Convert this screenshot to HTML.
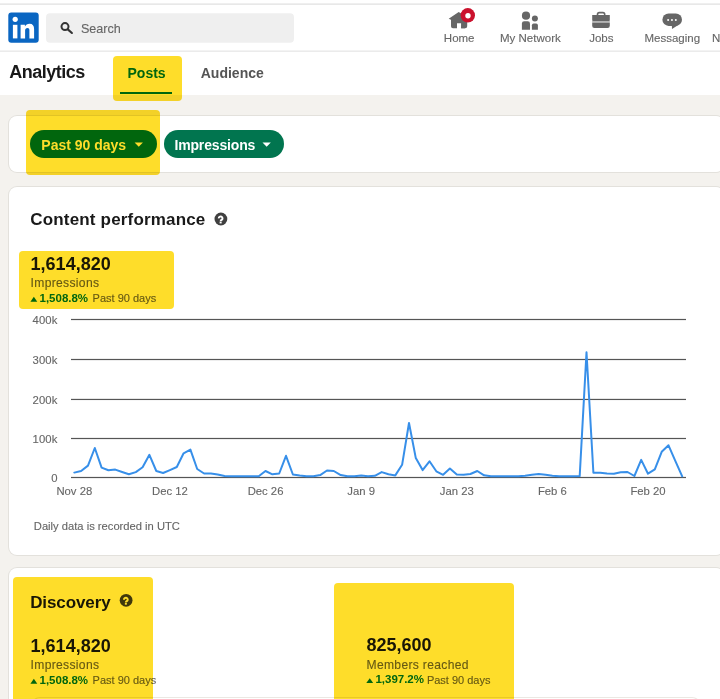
<!DOCTYPE html>
<html><head><meta charset="utf-8"><style>
html,body{margin:0;padding:0;}
body{width:720px;height:699px;overflow:hidden;position:relative;background:#f4f2ee;font-family:"Liberation Sans",sans-serif;}
.t{position:absolute;white-space:nowrap;line-height:1;}
.n{-webkit-text-stroke:0.12px currentColor;}
.r{position:absolute;}
</style></head><body>
<div class="r" style="left:0px;top:0px;width:720px;height:52px;background:#fff;"></div>
<div class="r" style="left:0px;top:3px;width:720px;height:1px;background:#efefef;"></div>
<div class="r" style="left:0px;top:4px;width:720px;height:1px;background:#e8e8e8;"></div>
<div class="r" style="left:0px;top:50px;width:720px;height:1px;background:#f3f3f3;"></div>
<div class="r" style="left:0px;top:51px;width:720px;height:1px;background:#ebebeb;"></div>
<div class="r" style="left:0px;top:52px;width:720px;height:42.5px;background:#fff;"></div>
<svg class="r" style="left:0;top:0" width="720" height="52" viewBox="0 0 720 52">
<rect x="8.3" y="12.4" width="30.4" height="30.4" rx="3" fill="#0a66c2"/>
<circle cx="15.2" cy="19.3" r="2.6" fill="#fff"/>
<rect x="12.9" y="24.8" width="4.5" height="13.6" fill="#fff"/>
<path d="M20.6 24.8 H24.9 V26.6 C25.7 25.0 27.3 23.8 29.6 23.8 C32.6 23.8 34.1 25.7 34.1 29.2 V38.4 H29.4 V30.3 C29.4 28.8 28.7 28 27.4 28 C26 28 25.1 29 25.1 30.6 V38.4 H20.6 Z" fill="#fff"/>
<rect x="46" y="13.2" width="248" height="29.6" rx="4" fill="#efefef"/>
<circle cx="65" cy="26.6" r="3.5" fill="none" stroke="#333" stroke-width="2"/>
<path d="M67.8 29.4 L71.9 33" stroke="#333" stroke-width="2.1" stroke-linecap="round"/>
<!-- home -->
<path d="M448.7 18.8 L458.7 11.9 L465 15.8 V28.3 H461.2 V23.2 H457 V28.3 H453 Q451 28.3 451 26.3 V19.8 Z" fill="#666"/>
<path d="M462 16 L469.6 20.8 L467.2 20.8 V26.3 Q467.2 28.3 465.2 28.3 H461 Z" fill="#666"/>
<circle cx="467.8" cy="15.3" r="7.2" fill="#cb112d"/>
<circle cx="468" cy="15.7" r="2.7" fill="#fff"/>
<!-- network -->
<circle cx="526" cy="15.7" r="4.1" fill="#666"/>
<circle cx="534.9" cy="18.4" r="3" fill="#666"/>
<path d="M521.9 29.7 V23.6 Q521.9 21.3 524.2 21.3 H527.7 Q530 21.3 530 23.6 V29.7 Z" fill="#666"/>
<path d="M531.9 29.7 V25.2 Q531.9 23.4 533.7 23.4 H536.1 Q537.9 23.4 537.9 25.2 V29.7 Z" fill="#666"/>
<!-- jobs -->
<rect x="597.5" y="12.6" width="7.2" height="4.2" rx="1.8" fill="none" stroke="#666" stroke-width="1.6"/>
<path d="M592.2 15.1 H609.8 V20.2 Q609.8 21 609 21 H593 Q592.2 21 592.2 20.2 Z" fill="#666"/>
<rect x="592.2" y="21" width="17.6" height="1.8" fill="#b4b4b4"/>
<path d="M592.2 22.8 H609.8 V25.8 Q609.8 28 607.6 28 H594.4 Q592.2 28 592.2 25.8 Z" fill="#666"/>
<!-- messaging -->
<rect x="662.4" y="13.5" width="19.6" height="12.4" rx="6.2" fill="#666"/>
<path d="M671.8 24.5 L679 24.5 L672 29 Z" fill="#666"/>
<circle cx="668.1" cy="19.9" r="1" fill="#fff"/>
<circle cx="671.95" cy="19.9" r="1" fill="#fff"/>
<circle cx="675.8" cy="19.9" r="1" fill="#fff"/>
</svg>
<div class="t n" style="left:80.90px;top:22.93px;font-size:12.6px;font-weight:400;color:#666;">Search</div>
<div class="t n" style="left:259.20px;width:400px;text-align:center;top:32.87px;font-size:11.5px;font-weight:400;color:#666;">Home</div>
<div class="t n" style="left:330.40px;width:400px;text-align:center;top:32.87px;font-size:11.5px;font-weight:400;color:#666;">My Network</div>
<div class="t n" style="left:401.30px;width:400px;text-align:center;top:32.87px;font-size:11.5px;font-weight:400;color:#666;">Jobs</div>
<div class="t n" style="left:472.30px;width:400px;text-align:center;top:32.87px;font-size:11.5px;font-weight:400;color:#666;">Messaging</div>
<div class="t n" style="left:712.00px;top:32.87px;font-size:11.5px;font-weight:400;color:#666;">N</div>
<div class="t" style="left:9.30px;top:62.96px;font-size:18px;font-weight:700;color:#191919;letter-spacing:-0.5px;">Analytics</div>
<div class="t" style="left:127.50px;top:66.15px;font-size:14px;font-weight:700;color:#01754f;">Posts</div>
<div class="t" style="left:200.75px;top:66.15px;font-size:14px;font-weight:700;color:#555;">Audience</div>
<div class="r" style="left:120px;top:91.5px;width:52px;height:2.0px;background:#01754f;"></div>
<div class="r" style="left:9px;top:116.3px;width:715px;height:55.7px;background:#fff;border-radius:8px;box-shadow:0 0 0 1px #e3e1dc;"></div>
<div class="r" style="left:30px;top:130px;width:127px;height:28px;background:#01754f;border-radius:14px;"></div>
<div class="t" style="left:41.30px;top:137.65px;font-size:14px;font-weight:700;color:#fff;">Past 90 days</div>
<div class="r" style="left:163.5px;top:130px;width:120.5px;height:28px;background:#01754f;border-radius:14px;"></div>
<div class="t" style="left:174.40px;top:137.65px;font-size:14px;font-weight:700;color:#fff;letter-spacing:-0.15px;">Impressions</div>
<svg class="r" style="left:0;top:0" width="720" height="180" viewBox="0 0 720 180">
<path d="M134.6 142.5 H142.9 L138.75 146.8 Z" fill="#fff"/>
<path d="M262.5 142.5 H270.8 L266.65 146.8 Z" fill="#fff"/>
</svg>
<div class="r" style="left:9px;top:186.5px;width:715px;height:368.29999999999995px;background:#fff;border-radius:8px;box-shadow:0 0 0 1px #e3e1dc;"></div>
<div class="t" style="left:30.30px;top:211.21px;font-size:17px;font-weight:700;color:#191919;letter-spacing:0.17px;">Content performance</div>
<div class="t" style="left:30.60px;top:255.06px;font-size:18px;font-weight:700;color:#191919;">1,614,820</div>
<div class="t n" style="left:30.60px;top:277.46px;font-size:12.1px;font-weight:400;color:#666;letter-spacing:0.32px;">Impressions</div>
<div class="t" style="left:39.50px;top:292.97px;font-size:11.5px;font-weight:700;color:#01754f;">1,508.8%</div>
<div class="t n" style="left:92.60px;top:293.39px;font-size:11px;font-weight:400;color:#666;">Past 90 days</div>
<div class="t n" style="right:662.30px;top:314.93px;font-size:11.3px;font-weight:400;color:#666;letter-spacing:0.2px;">400k</div>
<div class="t n" style="right:662.30px;top:354.93px;font-size:11.3px;font-weight:400;color:#666;letter-spacing:0.2px;">300k</div>
<div class="t n" style="right:662.30px;top:394.88px;font-size:11.3px;font-weight:400;color:#666;letter-spacing:0.2px;">200k</div>
<div class="t n" style="right:662.30px;top:433.93px;font-size:11.3px;font-weight:400;color:#666;letter-spacing:0.2px;">100k</div>
<div class="t n" style="right:662.30px;top:472.93px;font-size:11.3px;font-weight:400;color:#666;letter-spacing:0.2px;">0</div>
<div class="t n" style="left:-125.70px;width:400px;text-align:center;top:486.13px;font-size:11.3px;font-weight:400;color:#666;">Nov 28</div>
<div class="t n" style="left:-30.08px;width:400px;text-align:center;top:486.13px;font-size:11.3px;font-weight:400;color:#666;">Dec 12</div>
<div class="t n" style="left:65.54px;width:400px;text-align:center;top:486.13px;font-size:11.3px;font-weight:400;color:#666;">Dec 26</div>
<div class="t n" style="left:161.16px;width:400px;text-align:center;top:486.13px;font-size:11.3px;font-weight:400;color:#666;">Jan 9</div>
<div class="t n" style="left:256.78px;width:400px;text-align:center;top:486.13px;font-size:11.3px;font-weight:400;color:#666;">Jan 23</div>
<div class="t n" style="left:352.40px;width:400px;text-align:center;top:486.13px;font-size:11.3px;font-weight:400;color:#666;">Feb 6</div>
<div class="t n" style="left:448.02px;width:400px;text-align:center;top:486.13px;font-size:11.3px;font-weight:400;color:#666;">Feb 20</div>
<div class="t n" style="left:33.80px;top:520.72px;font-size:11.2px;font-weight:400;color:#666;">Daily data is recorded in UTC</div>
<svg class="r" style="left:0;top:0" width="720" height="560" viewBox="0 0 720 560">
<circle cx="220.9" cy="219.00" r="6.4" fill="#404040"/><path d="M218.80 218.40 A1.85 1.85 0 1 1 221.80 219.75 Q220.65 220.20 220.65 221.20" fill="none" stroke="#fff" stroke-width="2"/><rect x="219.65" y="221.70" width="2" height="1.7" fill="#fff"/>
<path d="M30.40 301.70 L33.85 296.80 L37.30 301.70 Z" fill="#01754f"/>
<rect x="71" y="318.90" width="615" height="1.2" fill="#555"/>
<rect x="71" y="358.90" width="615" height="1.2" fill="#555"/>
<rect x="71" y="398.85" width="615" height="1.2" fill="#555"/>
<rect x="71" y="437.90" width="615" height="1.2" fill="#555"/>
<rect x="71" y="476.90" width="615" height="1.2" fill="#555"/>
<polyline points="74.3,472.6 81.1,471.0 88.0,465.6 94.8,448.0 101.6,467.6 108.4,470.3 115.3,469.6 122.1,472.0 128.9,474.3 135.8,472.1 142.6,467.3 149.4,454.8 156.3,471.0 163.1,473.0 169.9,470.1 176.8,467.0 183.6,453.3 190.4,449.6 197.2,469.0 204.1,473.5 210.9,473.6 217.7,474.6 224.6,476.0 231.4,476.3 238.2,476.3 245.1,476.3 251.9,476.3 258.7,476.3 265.5,471.0 272.4,474.3 279.2,473.5 286.0,455.8 292.9,474.5 299.7,475.6 306.5,476.3 313.4,476.3 320.2,475.1 327.0,470.5 333.8,471.0 340.7,475.1 347.5,476.3 354.3,476.3 361.2,475.6 368.0,476.3 374.8,475.8 381.7,472.1 388.5,474.3 395.3,475.4 402.1,464.8 409.0,423.0 415.8,458.1 422.6,470.1 429.5,461.3 436.3,471.3 443.1,474.8 449.9,468.5 456.8,474.6 463.6,474.8 470.4,474.0 477.3,471.0 484.1,475.3 490.9,476.3 497.8,476.3 504.6,476.3 511.4,476.3 518.2,476.3 525.1,475.8 531.9,474.8 538.7,474.0 545.6,474.8 552.4,475.8 559.2,476.3 566.1,476.3 572.9,476.3 579.7,476.1 586.5,352.3 593.4,472.8 600.2,472.8 607.0,473.5 613.9,473.7 620.7,472.3 627.5,472.0 634.4,476.0 641.2,459.9 648.0,473.7 654.8,469.3 661.7,451.8 668.5,445.3 675.3,460.8 682.2,476.3" fill="none" stroke="#378fe9" stroke-width="2" stroke-linejoin="round" stroke-linecap="round"/>
</svg>
<div class="r" style="left:9px;top:568.3px;width:715px;height:151.70000000000005px;background:#fff;border-radius:8px;box-shadow:0 0 0 1px #e3e1dc;"></div>
<div class="r" style="left:31.5px;top:697.5px;width:668.5px;height:62.5px;background:#fff;border-radius:8px;box-shadow:0 0 0 1px #ebe8e2;"></div>
<div class="t" style="left:30.20px;top:593.51px;font-size:17px;font-weight:700;color:#191919;letter-spacing:-0.1px;">Discovery</div>
<div class="t" style="left:30.60px;top:637.06px;font-size:18px;font-weight:700;color:#191919;">1,614,820</div>
<div class="t n" style="left:30.60px;top:659.46px;font-size:12.1px;font-weight:400;color:#666;letter-spacing:0.32px;">Impressions</div>
<div class="t" style="left:39.50px;top:674.97px;font-size:11.5px;font-weight:700;color:#01754f;">1,508.8%</div>
<div class="t n" style="left:92.60px;top:675.39px;font-size:11px;font-weight:400;color:#666;">Past 90 days</div>
<div class="t" style="left:366.50px;top:636.46px;font-size:18px;font-weight:700;color:#191919;">825,600</div>
<div class="t n" style="left:366.50px;top:658.86px;font-size:12.1px;font-weight:400;color:#666;letter-spacing:0.32px;">Members reached</div>
<div class="t" style="left:375.40px;top:674.37px;font-size:11.5px;font-weight:700;color:#01754f;">1,397.2%</div>
<div class="t n" style="left:426.90px;top:674.79px;font-size:11px;font-weight:400;color:#666;">Past 90 days</div>
<svg class="r" style="left:0;top:0" width="720" height="699" viewBox="0 0 720 699">
<circle cx="126.1" cy="600.30" r="6.4" fill="#404040"/><path d="M124.00 599.70 A1.85 1.85 0 1 1 127.00 601.05 Q125.85 601.50 125.85 602.50" fill="none" stroke="#fff" stroke-width="2"/><rect x="124.85" y="603.00" width="2" height="1.7" fill="#fff"/>
<path d="M30.40 683.70 L33.85 678.80 L37.30 683.70 Z" fill="#01754f"/>
<path d="M366.30 683.10 L369.75 678.20 L373.20 683.10 Z" fill="#01754f"/>
</svg>
<div class="r" style="left:112.5px;top:55.5px;width:69.5px;height:45.0px;background:#fedd2a;border-radius:4px;mix-blend-mode:multiply;"></div>
<div class="r" style="left:26px;top:110.2px;width:133.5px;height:64.60000000000001px;background:#fedd2a;border-radius:4px;mix-blend-mode:multiply;"></div>
<div class="r" style="left:19px;top:251.4px;width:155.2px;height:57.400000000000006px;background:#fedd2a;border-radius:4px;mix-blend-mode:multiply;"></div>
<div class="r" style="left:13.2px;top:577.2px;width:139.60000000000002px;height:142.79999999999995px;background:#fedd2a;border-radius:4px;mix-blend-mode:multiply;"></div>
<div class="r" style="left:334.2px;top:582.8px;width:179.7px;height:137.20000000000005px;background:#fedd2a;border-radius:4px;mix-blend-mode:multiply;"></div>
</body></html>
